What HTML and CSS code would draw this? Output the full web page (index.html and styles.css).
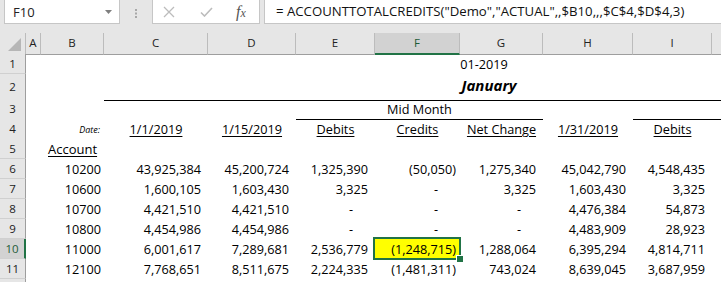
FILE: index.html
```html
<!DOCTYPE html>
<html lang="en">

<head>
    <meta charset="UTF-8">
    <meta name="viewport" content="width=device-width, initial-scale=1.0">
    <title>Sheet</title>
    <link rel="stylesheet" href="styles.css">
</head>

<body>
    <div class="excel">
        <div class="toolbar">
            <div class="namebox">
                <span>F10</span>
                <svg width="7" height="4" viewBox="0 0 7 4"><path d="M0 0H7L3.5 4Z" fill="#7f7f7f" /></svg>
            </div>
            <div class="grip">
                <svg width="2" height="9" viewBox="0 0 2 9">
                    <rect x="0" y="0" width="2" height="2" fill="#a8a8a8" />
                    <rect x="0" y="3.5" width="2" height="2" fill="#a8a8a8" />
                    <rect x="0" y="7" width="2" height="2" fill="#a8a8a8" />
                </svg>
            </div>
            <div class="fxbox">
                <svg class="cancel" width="12" height="12" viewBox="0 0 12 12"><path d="M1 1L11 11M11 1L1 11" stroke="#bcbcbc" stroke-width="1.3" /></svg>
                <svg class="enter" width="13" height="10" viewBox="0 0 13 10"><path d="M1 5.5L4.5 9L12 1" stroke="#bcbcbc" stroke-width="1.6" fill="none" /></svg>
                <span class="fx">f<span class="x">x</span></span>
            </div>
            <div class="formula">= ACCOUNTTOTALCREDITS("Demo","ACTUAL",,$B10,,,$C$4,$D$4,3)</div>
        </div>

        <div class="sheet">
            <div class="row head">
                <div class="corner">
                    <svg width="25" height="20" viewBox="0 0 25 20"><path d="M21 5V18H8Z" fill="#b6b6b6" /></svg>
                </div>
                <div class="ch">A</div>
                <div class="ch">B</div>
                <div class="ch">C</div>
                <div class="ch">D</div>
                <div class="ch">E</div>
                <div class="ch sel">F</div>
                <div class="ch">G</div>
                <div class="ch">H</div>
                <div class="ch">I</div>
                <div class="ch last"></div>
            </div>

            <div class="row">
                <div class="rh">1</div>
                <div class="c period">01-2019</div>
            </div>

            <div class="row tall">
                <div class="rh">2</div>
                <div class="c month">January</div>
            </div>

            <div class="row">
                <div class="rh">3</div>
                <div class="c mid">Mid Month</div>
                <div class="c rule"></div>
            </div>

            <div class="row">
                <div class="rh">4</div>
                <div class="c"></div>
                <div class="c date-label">Date:</div>
                <div class="c ctr"><span class="u">1/1/2019</span></div>
                <div class="c ctr"><span class="u">1/15/2019</span></div>
                <div class="c ctr"><span class="u">Debits</span></div>
                <div class="c ctr"><span class="u">Credits</span></div>
                <div class="c ctr"><span class="u">Net Change</span></div>
                <div class="c ctr"><span class="u">1/31/2019</span></div>
                <div class="c ctr"><span class="u">Debits</span></div>
            </div>

            <div class="row">
                <div class="rh">5</div>
                <div class="c"></div>
                <div class="c account"><span class="u">Account</span></div>
            </div>

            <div class="row">
                <div class="rh">6</div>
                <div class="c"></div>
                <div class="c acct">10200</div>
                <div class="c r">43,925,384</div>
                <div class="c r">45,200,724</div>
                <div class="c r">1,325,390</div>
                <div class="c r neg">(50,050)</div>
                <div class="c r">1,275,340</div>
                <div class="c r">45,042,790</div>
                <div class="c r">4,548,435</div>
            </div>

            <div class="row">
                <div class="rh">7</div>
                <div class="c"></div>
                <div class="c acct">10600</div>
                <div class="c r">1,600,105</div>
                <div class="c r">1,603,430</div>
                <div class="c r">3,325</div>
                <div class="c r dash">-</div>
                <div class="c r">3,325</div>
                <div class="c r">1,603,430</div>
                <div class="c r">3,325</div>
            </div>

            <div class="row">
                <div class="rh">8</div>
                <div class="c"></div>
                <div class="c acct">10700</div>
                <div class="c r">4,421,510</div>
                <div class="c r">4,421,510</div>
                <div class="c r dash">-</div>
                <div class="c r dash">-</div>
                <div class="c r dash">-</div>
                <div class="c r">4,476,384</div>
                <div class="c r">54,873</div>
            </div>

            <div class="row">
                <div class="rh">9</div>
                <div class="c"></div>
                <div class="c acct">10800</div>
                <div class="c r">4,454,986</div>
                <div class="c r">4,454,986</div>
                <div class="c r dash">-</div>
                <div class="c r dash">-</div>
                <div class="c r dash">-</div>
                <div class="c r">4,483,909</div>
                <div class="c r">28,923</div>
            </div>

            <div class="row">
                <div class="rh sel">10</div>
                <div class="c"></div>
                <div class="c acct">11000</div>
                <div class="c r">6,001,617</div>
                <div class="c r">7,289,681</div>
                <div class="c r">2,536,779</div>
                <div class="c r neg active">(1,248,715)</div>
                <div class="c r">1,288,064</div>
                <div class="c r">6,395,294</div>
                <div class="c r">4,814,711</div>
            </div>

            <div class="row">
                <div class="rh">11</div>
                <div class="c"></div>
                <div class="c acct">12100</div>
                <div class="c r">7,768,651</div>
                <div class="c r">8,511,675</div>
                <div class="c r">2,224,335</div>
                <div class="c r neg">(1,481,311)</div>
                <div class="c r">743,024</div>
                <div class="c r">8,639,045</div>
                <div class="c r">3,687,959</div>
            </div>

            <div class="row">
                <div class="rh"></div>
            </div>
        </div>
    </div>
</body>

</html>
```

FILE: styles.css
```css
* {
    box-sizing: border-box;
}

body {
    margin: 0px;
    font-family: "Open Sans", "Noto Sans", sans-serif;
}

.excel {
    width: 721px;
    height: 282px;
    overflow: hidden;
    background: #fff;
}

/* formula bar */

.toolbar {
    display: flex;
    align-items: flex-start;
    height: 33px;
    background: #e6e6e6;
}

.namebox {
    display: flex;
    align-items: center;
    justify-content: space-between;
    width: 116px;
    height: 24px;
    margin-left: 4px;
    padding: 0px 7px 0px 8px;
    background: #fff;
    border: 1px solid #c6c6c6;
    border-top: none;
    font-size: 13px;
    color: #222;
}

.grip {
    display: flex;
    justify-content: center;
    align-items: center;
    width: 32px;
    height: 24px;
    padding-top: 2px;
}

.fxbox {
    display: flex;
    align-items: center;
    width: 108px;
    height: 24px;
    padding-left: 10px;
    background: #fff;
    border: 1px solid #c6c6c6;
    border-top: none;
}

.enter {
    margin-left: 25px;
}

.fx {
    margin-left: 23px;
    font-family: "Liberation Serif", serif;
    font-style: italic;
    font-size: 16px;
    color: #555;
    line-height: 1;
}

.fx .x {
    font-size: 12px;
}

.formula {
    flex: 1;
    height: 24px;
    margin-left: 4px;
    margin-right: -2px;
    padding-left: 11px;
    background: #fff;
    border: 1px solid #c6c6c6;
    border-top: none;
    font-size: 13.2px;
    line-height: 23px;
    white-space: nowrap;
    color: #111;
}

/* grid */

.row {
    display: grid;
    grid-template-columns: 26px 15px 63px 104px 88px 79px 85px 83px 90px 79px 1fr;
    height: 20px;
}

.row.head {
    height: 21px;
}

.row.tall {
    height: 25px;
}

.corner {
    background: #e6e6e6;
    border-right: 1px solid #bcbcbc;
    border-bottom: 1px solid #9e9e9e;
}

.corner svg {
    display: block;
}

.ch {
    background: #e6e6e6;
    border-right: 1px solid #bcbcbc;
    border-bottom: 1px solid #9e9e9e;
    text-align: center;
    font-size: 11.5px;
    line-height: 20px;
    color: #222;
}

.ch.last {
    border-right: none;
}

.ch.sel {
    background: #d2d2d2;
    border-bottom: 2px solid #217346;
    color: #1e5c38;
}

.rh {
    background: #e6e6e6;
    border-right: 1px solid #9e9e9e;
    border-bottom: 1px solid #d0d0d0;
    text-align: center;
    font-size: 11.5px;
    line-height: 19px;
    color: #222;
}

.tall .rh {
    line-height: 26px;
}

.rh.sel {
    background: #d2d2d2;
    border-right: 2px solid #217346;
    color: #1e5c38;
}

.c {
    font-size: 12.7px;
    line-height: 20px;
    white-space: nowrap;
    color: #000;
}

.r {
    text-align: right;
    padding-right: 7px;
}

.r.neg {
    padding-right: 4px;
}

.r.dash {
    padding-right: 22px;
}

.ctr {
    text-align: center;
}

.u {
    text-decoration: underline;
    text-decoration-thickness: 1px;
    text-underline-offset: 2px;
}

.period {
    grid-column: 4 / -1;
    padding-left: 143px;
    text-align: center;
}

.month {
    grid-column: 4 / -1;
    padding-left: 153px;
    text-align: center;
    font-size: 15px;
    font-weight: bold;
    font-style: italic;
    line-height: 22px;
    border-bottom: 1px solid #000;
}

.mid {
    grid-column: 6 / 9;
    text-align: center;
    border-bottom: 1px solid #000;
}

.rule {
    grid-column: 10 / -1;
    border-bottom: 1px solid #000;
}

.date-label {
    text-align: right;
    padding-right: 4px;
    font-size: 9px;
    font-style: italic;
    line-height: 22px;
}

.account {
    padding-left: 7px;
    font-size: 13px;
}

.acct {
    text-align: right;
    padding-right: 3px;
}

.active {
    position: relative;
    background: #ffff00;
}

.active::after {
    content: "";
    position: absolute;
    top: -2px;
    left: -2px;
    right: -1px;
    bottom: -1px;
    border: 2px solid #217346;
}

.active::before {
    content: "";
    position: absolute;
    right: -4px;
    bottom: -4px;
    width: 6px;
    height: 6px;
    background: #217346;
    border: 1px solid #fff;
    z-index: 1;
}
```
